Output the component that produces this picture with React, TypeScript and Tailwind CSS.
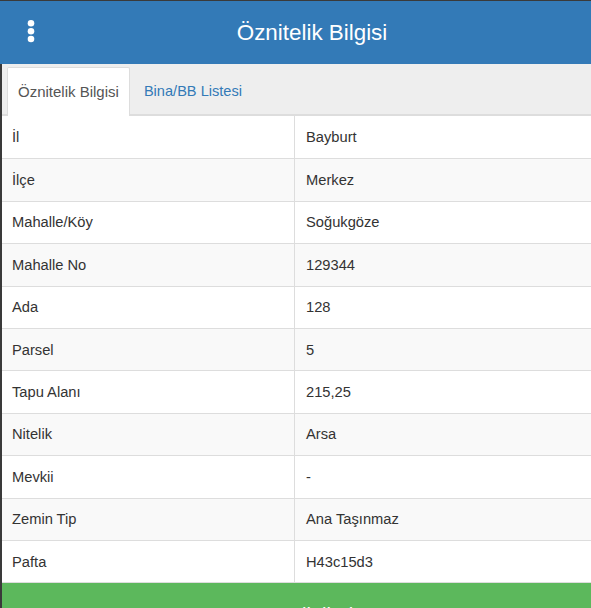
import React from "react";

const rows: [string, string][] = [
  ["İl", "Bayburt"],
  ["İlçe", "Merkez"],
  ["Mahalle/Köy", "Soğukgöze"],
  ["Mahalle No", "129344"],
  ["Ada", "128"],
  ["Parsel", "5"],
  ["Tapu Alanı", "215,25"],
  ["Nitelik", "Arsa"],
  ["Mevkii", "-"],
  ["Zemin Tip", "Ana Taşınmaz"],
  ["Pafta", "H43c15d3"],
];

const App = () => {
  return (
    <div
      className="w-[591px] h-[608px] overflow-hidden bg-[#3a3a3a] pt-px"
      style={{ fontFamily: '"Liberation Sans", Arial, sans-serif' }}
    >
      {/* Header */}
      <div className="relative h-[63px] bg-[#337ab7] flex items-center justify-center pl-[33px]">
        <svg
          className="absolute left-[27px] top-[15px]"
          width="8"
          height="32"
          viewBox="0 0 8 32"
        >
          <circle cx="4" cy="7.3" r="3.3" fill="#fff" />
          <circle cx="4" cy="15.3" r="3.3" fill="#fff" />
          <circle cx="4" cy="23" r="3.3" fill="#fff" />
        </svg>
        <h1 className="text-white text-[22.4px] leading-[32px]">
          Öznitelik Bilgisi
        </h1>
      </div>

      <div className="ml-[2px] bg-white">
        {/* Tabs */}
        <div className="h-[52px] bg-[#eeeeee] border-b-2 border-[#dddddd] flex items-end pl-[5px]">
          <div className="h-[49px] -mb-[2px] bg-white border border-b-0 border-[#dddddd] rounded-t-[2px] px-[10px] flex items-center text-[15px] text-[#555555]">
            Öznitelik Bilgisi
          </div>
          <div className="h-[49px] -mb-[2px] ml-[4px] px-[10px] flex items-center text-[14.6px] text-[#337ab7]">
            Bina/BB Listesi
          </div>
        </div>

        {/* Table */}
        <div className="text-[14.7px] text-[#333333]">
          {rows.map(([label, value], i) => (
            <div
              key={label}
              className={`grid grid-cols-[292px_1fr] h-[42.4px] ${
                i === 0 ? "" : "border-t border-[#dddddd]"
              } ${i % 2 === 1 ? "bg-[#f9f9f9]" : "bg-white"}`}
            >
              <div className="flex items-center pl-[10px]">{label}</div>
              <div className="flex items-center pl-[11px] border-l border-[#dddddd]">
                {value}
              </div>
            </div>
          ))}
        </div>

        {/* Action */}
        <div className="border-t border-[#dddddd]">
          <button className="w-full bg-[#5cb85c] text-white text-[20px] leading-[28px] pt-[18px] pb-[14px]">
            Tapu Bilgileri
          </button>
        </div>
      </div>
    </div>
  );
};

export default App;
